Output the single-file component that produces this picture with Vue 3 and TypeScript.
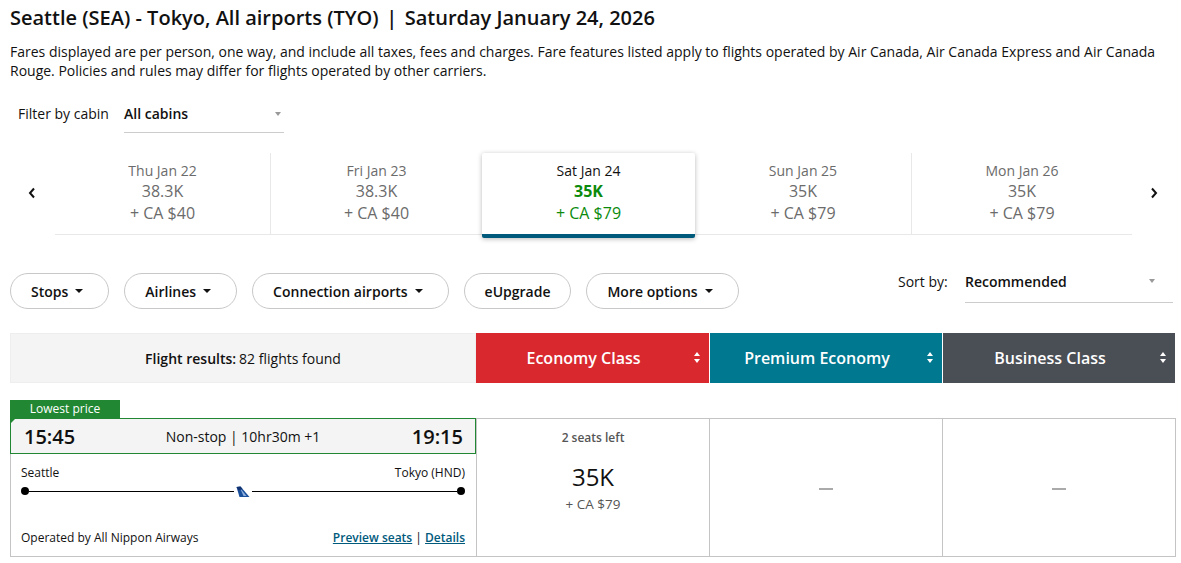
<script setup lang="ts">
interface DayFare {
  date: string
  points: string
  cash: string
  active?: boolean
}

const days: DayFare[] = [
  { date: 'Thu Jan 22', points: '38.3K', cash: '+ CA $40' },
  { date: 'Fri Jan 23', points: '38.3K', cash: '+ CA $40' },
  { date: 'Sat Jan 24', points: '35K', cash: '+ CA $79', active: true },
  { date: 'Sun Jan 25', points: '35K', cash: '+ CA $79' },
  { date: 'Mon Jan 26', points: '35K', cash: '+ CA $79' }
]

const filters = [
  { label: 'Stops', caret: true },
  { label: 'Airlines', caret: true },
  { label: 'Connection airports', caret: true },
  { label: 'eUpgrade', caret: false },
  { label: 'More options', caret: true }
]

const cabins = [
  { label: 'Economy Class', cls: 'eco' },
  { label: 'Premium Economy', cls: 'prem' },
  { label: 'Business Class', cls: 'biz' }
]
</script>

<template>
  <div class="page">
    <h1 class="title">Seattle (SEA) - Tokyo, All airports (TYO)<span class="sep">|</span>Saturday January 24, 2026</h1>
    <p class="desc">
      Fares displayed are per person, one way, and include all taxes, fees and charges. Fare features listed apply to flights operated by Air Canada, Air Canada Express and Air Canada Rouge. Policies and rules may differ for flights operated by other carriers.
    </p>

    <div class="cabin-filter">
      <span class="cabin-label">Filter by cabin</span>
      <div class="select cabin-select">
        <span>All cabins</span>
        <i class="select-caret"></i>
      </div>
    </div>

    <div class="carousel">
      <button class="nav">
        <svg width="8" height="12" viewBox="0 0 8 12"><path d="M6 1.5 2 6l4 4.5" fill="none" stroke="#111" stroke-width="2" /></svg>
      </button>
      <div class="days">
        <div v-for="d in days" :key="d.date" class="day" :class="{ active: d.active }">
          <div class="day-date">{{ d.date }}</div>
          <div class="day-points">{{ d.points }}</div>
          <div class="day-cash">{{ d.cash }}</div>
        </div>
      </div>
      <button class="nav">
        <svg width="8" height="12" viewBox="0 0 8 12"><path d="M2 1.5 6 6l-4 4.5" fill="none" stroke="#111" stroke-width="2" /></svg>
      </button>
    </div>

    <div class="toolbar">
      <div class="pills">
        <button v-for="f in filters" :key="f.label" class="pill">
          {{ f.label }}<i v-if="f.caret" class="pill-caret"></i>
        </button>
      </div>
      <div class="sort">
        <span class="sort-label">Sort by:</span>
        <div class="select sort-select">
          <span>Recommended</span>
          <i class="select-caret"></i>
        </div>
      </div>
    </div>

    <div class="grid head">
      <div class="results"><b>Flight results:</b> 82 flights found</div>
      <div v-for="c in cabins" :key="c.label" class="cabin" :class="c.cls">
        {{ c.label }}
        <span class="sorter"><i class="up"></i><i class="down"></i></span>
      </div>
    </div>

    <div class="flight-wrap">
      <div class="tag">Lowest price</div>
      <div class="grid flight">
        <div class="info">
          <div class="times">
            <span class="time">15:45</span>
            <span class="duration">Non-stop | 10hr30m +1</span>
            <span class="time">19:15</span>
          </div>
          <div class="route">
            <div class="cities"><span>Seattle</span><span>Tokyo (HND)</span></div>
            <div class="track">
              <i class="dot"></i>
              <i class="line"></i>
              <svg class="tail" width="14" height="12" viewBox="0 0 14 12">
                <path d="M0.5 1 4.5 0.5 13.5 11 3.5 11Z" fill="#1a4f9c" />
                <path d="M4 2 10.5 10 7.5 10Z" fill="#8fb0dc" />
                <path d="M0.5 1 4.5 0.5 6.5 3 2.5 4.5Z" fill="#12326f" />
              </svg>
              <i class="line"></i>
              <i class="dot"></i>
            </div>
            <div class="meta">
              <span>Operated by All Nippon Airways</span>
              <span class="links"><a href="#">Preview seats</a> | <a href="#">Details</a></span>
            </div>
          </div>
        </div>
        <div class="fare">
          <div class="seats">2 seats left</div>
          <div class="fare-points">35K</div>
          <div class="fare-cash">+ CA $79</div>
        </div>
        <div class="fare empty"><i class="dash"></i></div>
        <div class="fare empty"><i class="dash"></i></div>
      </div>
    </div>
  </div>
</template>

<style scoped>
.page {
  width: 1165px;
  margin-left: 10px;
  font-family: "Open Sans", "Liberation Sans", sans-serif;
  color: #111;
}

.title {
  margin: 0;
  padding-top: 5px;
  font-size: 20px;
  line-height: 25px;
  font-weight: 600;
}

.sep {
  margin: 0 7.5px;
}

.desc {
  margin: 12px 0 0;
  font-size: 14px;
  line-height: 19px;
  width: 1160px;
}

.cabin-filter {
  display: flex;
  margin-top: 16px;
  margin-left: 8px;
  height: 57px;
  font-size: 14px;
}

.cabin-label {
  width: 106px;
  line-height: 36px;
}

.select {
  display: flex;
  justify-content: space-between;
  border-bottom: 1px solid #ccc;
  position: relative;
  font-weight: 600;
  font-size: 14px;
}

.cabin-select {
  width: 160px;
  height: 36px;
  line-height: 36px;
}

.select-caret {
  position: absolute;
  right: 3px;
  top: 16px;
  border: 3.5px solid transparent;
  border-top: 4px solid #999;
  border-bottom: 0;
}

.carousel {
  display: flex;
  height: 85px;
}

.nav {
  width: 45px;
  padding: 0 1px 0 0;
  border: 0;
  background: none;
  height: 80px;
  display: flex;
  align-items: center;
  justify-content: center;
}

.nav:last-child {
  width: 43px;
  padding: 0 0 0 1px;
}

.days {
  display: flex;
  width: 1077px;
  height: 81px;
  border-bottom: 1px solid #e8e8e8;
}

.day {
  flex: none;
  width: 216px;
  height: 81px;
  padding-top: 8px;
  text-align: center;
  color: #6b6b6b;
  box-sizing: border-box;
  border-right: 1px solid #e8e8e8;
}

.day:nth-child(2) {
  width: 211px;
  border-right: 0;
}

.day:nth-child(4) {
  width: 217px;
}

.day:last-child {
  width: 220px;
  border-right: 0;
}

.day.active {
  width: 213px;
  height: 85px;
  color: #0b8a0b;
  background: #fff;
  border-right: 0;
  border-bottom: 4px solid #005a7c;
  border-radius: 2px;
  box-shadow: 0 1px 5px rgba(0, 0, 0, 0.28);
  position: relative;
}

.day.active .day-date {
  color: #111;
}

.day.active .day-points {
  font-weight: 700;
}

.day-date {
  font-size: 14px;
  line-height: 20px;
}

.day-points {
  font-size: 16px;
  line-height: 21px;
}

.day-cash {
  font-size: 16px;
  line-height: 21px;
  margin-top: 1px;
}

.toolbar {
  display: flex;
  justify-content: space-between;
  margin-top: 35px;
  height: 60px;
}

.pills {
  display: flex;
  gap: 15px;
  align-items: flex-start;
}

.pill {
  height: 36px;
  padding: 0 20px;
  border: 1px solid #c8c8c8;
  border-radius: 18px;
  background: #fff;
  font: 600 14px "Open Sans", sans-serif;
  color: #111;
  display: flex;
  align-items: center;
}

.pill-caret {
  margin: 0 5px 0 7px;
  border: 4px solid transparent;
  border-top: 4px solid #111;
  border-bottom: 0;
}

.sort {
  display: flex;
  font-size: 14px;
  margin-right: 2px;
}

.sort-label {
  width: 67px;
  line-height: 18px;
}

.sort-select {
  width: 208px;
  height: 29px;
  line-height: 18px;
}

.sort-select .select-caret {
  top: 6px;
  right: 18px;
}

.grid {
  display: grid;
  grid-template-columns: 466px 234px 233px 232px;
}

.head {
  height: 50px;
}

.results {
  background: #f4f4f4;
  border: 1px solid #eee;
  display: flex;
  align-items: center;
  justify-content: center;
  gap: 3px;
  font-size: 14px;
  box-sizing: border-box;
}

.results b {
  font-weight: 600;
}

.cabin {
  position: relative;
  color: #fff;
  font-size: 16px;
  font-weight: 600;
  line-height: 50px;
  text-align: center;
  margin-right: 1px;
  padding-right: 18px;
}

.cabin:last-child {
  margin-right: 0;
}

.eco {
  background: #d9292f;
}

.prem {
  background: #007890;
}

.biz {
  background: #4a4e55;
}

.sorter {
  position: absolute;
  right: 9px;
  top: 19px;
  display: flex;
  flex-direction: column;
  gap: 3px;
}

.up,
.down {
  display: block;
  border: 3.5px solid transparent;
}

.up {
  border-bottom: 4px solid #fff;
  border-top: 0;
}

.down {
  border-top: 4px solid #fff;
  border-bottom: 0;
}

.flight-wrap {
  margin-top: 17px;
  position: relative;
}

.tag {
  width: 110px;
  height: 18px;
  background: #218732;
  color: #fff;
  font-size: 12px;
  line-height: 18px;
  text-align: center;
  position: relative;
}

.tag::after {
  content: "";
  position: absolute;
  left: 0;
  top: 18px;
  border-top: 6px solid #218732;
  border-right: 6px solid transparent;
  z-index: 1;
}

.flight {
  width: 1166px;
  height: 139px;
  border: 1px solid #c4c4c4;
  box-sizing: border-box;
  grid-template-columns: 465px 233px 233px 233px;
}

.info {
  display: flex;
  flex-direction: column;
  font-size: 12px;
}

.times {
  position: relative;
  height: 36px;
  margin: -1px 0 0 -1px;
  padding: 0 12px 0 13px;
  border: 1px solid #218732;
  background: #f4f4f4;
  display: flex;
  align-items: center;
  justify-content: space-between;
  box-sizing: border-box;
}

.time {
  font-size: 20px;
  font-weight: 600;
}

.duration {
  position: absolute;
  left: 0;
  right: 0;
  text-align: center;
  font-size: 14px;
}

.route {
  flex: 1;
  padding: 10px 11px 0 10px;
  display: flex;
  flex-direction: column;
}

.cities,
.meta {
  display: flex;
  justify-content: space-between;
  line-height: 18px;
}

.track {
  display: flex;
  align-items: center;
  height: 10px;
  margin-top: 4px;
}

.dot {
  width: 8px;
  height: 8px;
  border-radius: 50%;
  background: #000;
  flex: none;
}

.line {
  flex: 1;
  height: 1px;
  background: #000;
}

.tail {
  flex: none;
  margin: 1px 2px 0;
}

.meta {
  margin-top: auto;
  padding-bottom: 9px;
}

.links a {
  color: #005a7c;
  font-weight: 600;
  text-decoration: underline;
}

.fare {
  border-left: 1px solid #c4c4c4;
  text-align: center;
  box-sizing: border-box;
}

.seats {
  margin-top: 11px;
  font-size: 12px;
  font-weight: 600;
  line-height: 16px;
  color: #555;
}

.fare-points {
  margin-top: 15px;
  font-size: 24px;
  line-height: 32px;
}

.fare-cash {
  margin-top: 1px;
  font-size: 13.5px;
  line-height: 20px;
  color: #555;
}

.empty {
  display: flex;
  align-items: center;
  justify-content: center;
  padding-top: 3px;
}

.dash {
  width: 14px;
  height: 2px;
  background: #aaa;
}
</style>

<style>
body {
  background: #fff;
  overflow: hidden;
}
</style>
